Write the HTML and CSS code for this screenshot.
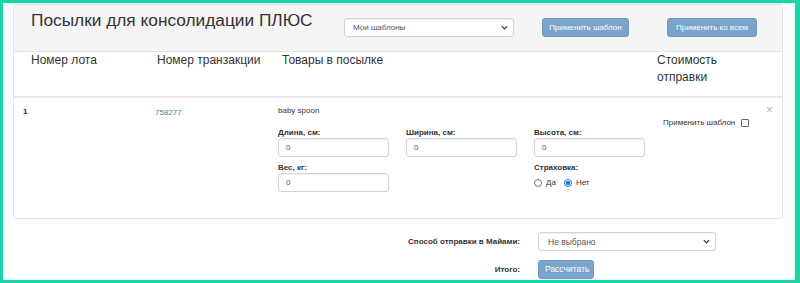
FILE: index.html
```html
<!DOCTYPE html>
<html lang="ru">
<head>
<meta charset="utf-8">
<title>Посылки для консолидации ПЛЮС</title>
<link rel="stylesheet" href="styles.css">
</head>
<body>
<div class="frame">
  <div class="panel">
    <div class="panel-heading">
      <h3 class="title">Посылки для консолидации ПЛЮС</h3>
      <div class="select-wrap sel-templates">
        <select class="select"><option>Мои шаблоны</option></select>
        <svg class="chev" viewBox="0 0 8 5" width="7" height="5"><path d="M1 1 L4 4 L7 1" fill="none" stroke="#333" stroke-width="1.4"/></svg>
      </div>
      <button class="btn btn-apply">Применить шаблон</button>
      <button class="btn btn-all">Применить ко всем</button>
    </div>
    <div class="thead">
      <div>Номер лота</div>
      <div>Номер транзакции</div>
      <div>Товары в посылке</div>
      <div>Стоимость<br>отправки</div>
    </div>
    <div class="trow">
      <div class="lot">1</div>
      <div class="trans"><a href="#">758277</a></div>
      <div class="goods">
        <div class="item-name">baby spoon</div>
        <div class="fields">
          <div class="field">
            <label>Длина, см:</label>
            <input class="input" value="0">
          </div>
          <div class="field">
            <label>Ширина, см:</label>
            <input class="input" value="0">
          </div>
          <div class="field">
            <label>Высота, см:</label>
            <input class="input" value="0">
          </div>
          <div class="field">
            <label>Вес, кг:</label>
            <input class="input" value="0">
          </div>
          <div class="field"></div>
          <div class="field">
            <label>Страховка:</label>
            <div class="radios">
              <span class="radio-opt"><span class="radio"></span>Да</span>
              <span class="radio-opt"><span class="radio checked"></span>Нет</span>
            </div>
          </div>
        </div>
      </div>
      <div class="side">
        <div class="close">×</div>
        <div class="apply-tpl">Применить шаблон <span class="checkbox"></span></div>
      </div>
    </div>
  </div>
  <div class="form-rows">
    <div class="form-label">Способ отправки в Майами:</div>
    <div class="select-wrap sel-ship">
      <select class="select"><option>Не выбрано</option></select>
      <svg class="chev" viewBox="0 0 8 5" width="7" height="5"><path d="M1 1 L4 4 L7 1" fill="none" stroke="#333" stroke-width="1.4"/></svg>
    </div>
    <div class="form-label">Итого:</div>
    <div><button class="btn btn-calc">Рассчитать</button></div>
  </div>
</div>
</body>
</html>
```

FILE: styles.css
```css
* { box-sizing: border-box; }
html, body { margin: 0; padding: 0; background: #fff; }
body {
  font-family: "Liberation Sans", Arial, sans-serif;
  color: #333;
  font-size: 8px;
  line-height: 10px;
  overflow: hidden;
}
.frame {
  width: 800px;
  height: 283px;
  border: 3px solid #19d5a7;
  border-right-width: 5px;
  padding: 1px 0 0 10px;
  overflow: hidden;
  box-shadow: inset 0 0 3px rgba(25, 213, 167, 0.35);
}
.panel {
  width: 770px;
  border: 1px solid #e3e3e3;
  border-radius: 3px;
  background: #fff;
}
.panel-heading {
  display: flex;
  align-items: flex-start;
  height: 47px;
  background: #f5f5f5;
  border-bottom: 1px solid #e3e3e3;
  border-radius: 3px 3px 0 0;
  padding-left: 17px;
}
.title {
  flex: 0 0 313px;
  margin: 4px 0 0;
  font-weight: normal;
  font-size: 17.3px;
  line-height: 22px;
  color: #333;
  white-space: nowrap;
}
.select-wrap {
  position: relative;
  height: 19px;
}
.sel-templates { width: 170px; margin-top: 13px; }
.select {
  -webkit-appearance: none;
  appearance: none;
  display: block;
  width: 100%;
  height: 19px;
  margin: 0;
  padding: 0 8px;
  font-family: inherit;
  font-size: 8px;
  color: #555;
  background: #fff;
  border: 1px solid #d4d4d4;
  border-radius: 3px;
  box-shadow: inset 0 1px 1px rgba(0,0,0,0.06);
}
.chev {
  position: absolute;
  right: 6px;
  top: 7px;
}
.btn {
  height: 19px;
  padding: 0 6px;
  border: 1px solid #6e98c2;
  border-radius: 3px;
  background: #7ba4cc;
  color: #fff;
  font-family: inherit;
  font-size: 8px;
  line-height: 17px;
  white-space: nowrap;
}
.btn-apply { width: 87px; margin: 13px 0 0 28px; }
.btn-all { width: 90px; margin: 13px 0 0 38px; }

.thead {
  display: grid;
  grid-template-columns: 126px 125px 375px 1fr;
  height: 46px;
  padding: 0 0 0 17px;
  border-bottom: 2px solid #e6e6e6;
  font-size: 12px;
  line-height: 17px;
}
.trow {
  display: grid;
  grid-template-columns: 132px 123px 385px 1fr;
  height: 120px;
  padding-left: 9px;
}
.lot { font-weight: bold; padding-top: 9px; }
.trans { padding-top: 10px; }
.trans a { color: #4a7eb0; text-decoration: none; }
.goods { padding-top: 8px; }
.item-name { height: 10px; }
.fields {
  display: grid;
  grid-template-columns: 111px 111px 110px;
  column-gap: 17px;
  row-gap: 6px;
  margin-top: 12px;
}
.field label {
  display: block;
  font-weight: bold;
  line-height: 10px;
}
.input {
  display: block;
  width: 111px;
  height: 19px;
  margin: 0;
  padding: 0 7px;
  font-family: inherit;
  font-size: 8px;
  color: #555;
  background: #fff;
  border: 1px solid #d4d4d4;
  border-radius: 3px;
  box-shadow: inset 0 1px 1px rgba(0,0,0,0.06);
}
.radios {
  display: flex;
  align-items: center;
  height: 20px;
}
.radio-opt {
  display: inline-flex;
  align-items: center;
  margin-right: 8px;
}
.radio {
  display: inline-block;
  width: 8px;
  height: 8px;
  border: 1px solid #777;
  border-radius: 50%;
  margin-right: 4px;
  background: #fff;
}
.radio.checked {
  border-color: #1a73e8;
  background: radial-gradient(circle, #1a73e8 0 2px, #fff 2.3px);
}
.side {
  display: flex;
  flex-direction: column;
  padding: 7px 9px 0 0;
}
.close {
  align-self: flex-end;
  font-size: 12px;
  line-height: 10px;
  color: #b5b5b5;
}
.apply-tpl {
  margin-top: 3px;
  display: flex;
  align-items: center;
  white-space: nowrap;
}
.checkbox {
  display: inline-block;
  width: 8px;
  height: 8px;
  margin-left: 6px;
  border: 1px solid #666;
  border-radius: 1px;
  background: #fff;
}
.form-rows {
  display: grid;
  grid-template-columns: 507px 178px;
  column-gap: 18px;
  row-gap: 9px;
  margin-top: 13px;
  align-items: center;
}
.form-label {
  text-align: right;
  font-weight: bold;
}
.sel-ship { width: 178px; }
.sel-ship .select { font-size: 8.5px; padding-left: 9px; }
.btn-calc { width: 56px; font-size: 8.5px; }
```
